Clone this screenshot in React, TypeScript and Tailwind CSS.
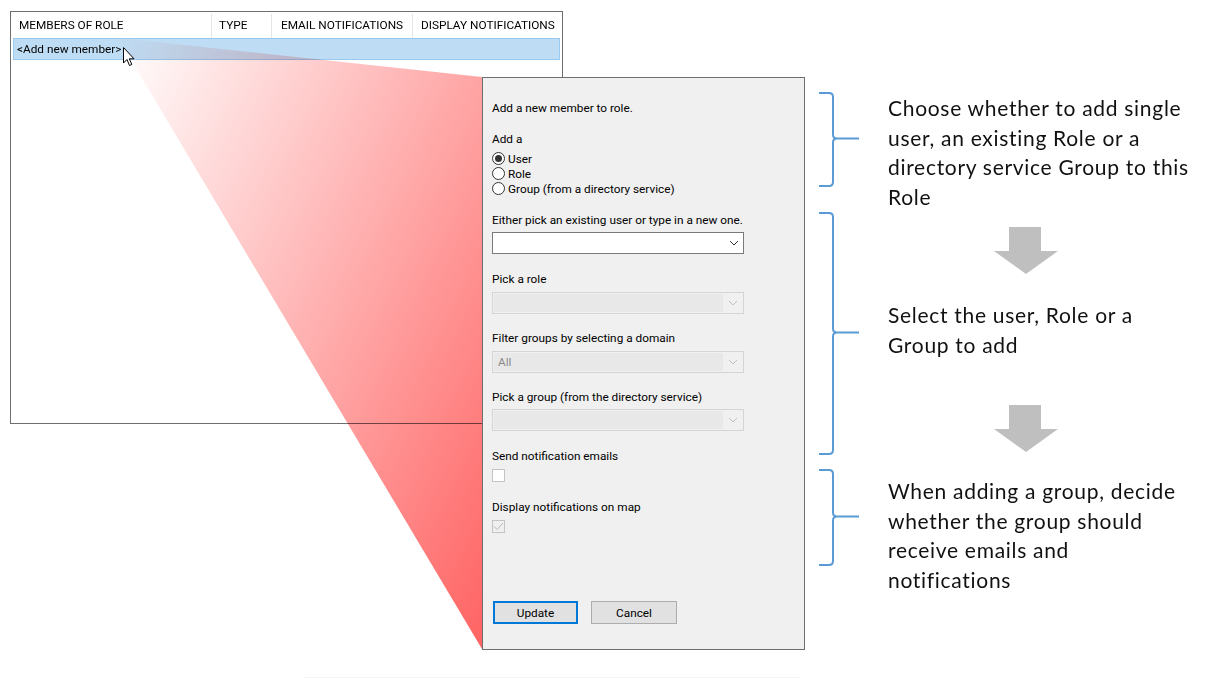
import React from "react";

const ui = "font-['Roboto','Liberation_Sans',sans-serif]";

function Brace({ h }: { h: number }) {
  const m = h / 2;
  return (
    <svg width="42" height={h + 2} className="shrink-0">
      <path
        d={`M1 1 H11 Q15 1 15 5 V${m - 4} Q15 ${m} 19 ${m} H41 M19 ${m} Q15 ${m} 15 ${m + 4} V${h - 3} Q15 ${h + 1} 11 ${h + 1} H1`}
        fill="none"
        stroke="#5b9bd5"
        strokeWidth="2"
      />
    </svg>
  );
}

function DownArrow() {
  return (
    <svg width="64" height="48" className="block">
      <rect x="15" y="0" width="32" height="25" fill="#bfbfbf" />
      <polygon points="0,24 64,24 32,47" fill="#bfbfbf" />
    </svg>
  );
}

function Chevron({ color }: { color: string }) {
  return (
    <svg width="10" height="6" viewBox="0 0 10 6">
      <path d="M1 1 L5 5 L9 1" fill="none" stroke={color} strokeWidth="1" />
    </svg>
  );
}

function Combo({ disabled, value }: { disabled?: boolean; value?: string }) {
  if (!disabled) {
    return (
      <div className="flex h-[22px] w-[252px] items-center justify-end border border-[#7a7a7a] bg-white pr-[4px]">
        <Chevron color="#333" />
      </div>
    );
  }
  return (
    <div className="flex h-[22px] w-[252px] border border-[#d4d4d4] bg-[#f0f0f0] p-[1px]">
      <div className="flex flex-1 items-center bg-[#e8e8e8] pl-[4px] pt-[1px] text-[#8a8a8a]">{value}</div>
      <div className="flex w-[19px] items-center justify-center">
        <Chevron color="#c0c0c0" />
      </div>
    </div>
  );
}

function Label({ mt, children }: { mt: string; children: React.ReactNode }) {
  return <div className={`${mt} h-[15px] leading-[18px]`}>{children}</div>;
}

function Radio({ checked, label }: { checked?: boolean; label: string }) {
  return (
    <div className="flex h-[15px] items-center">
      <span className="flex h-[13px] w-[13px] items-center justify-center rounded-full border border-[#333] bg-white">
        {checked && <span className="h-[7px] w-[7px] rounded-full bg-[#333]" />}
      </span>
      <span className="ml-[3px] translate-y-[1px]">{label}</span>
    </div>
  );
}

export default function App() {
  return (
    <div className="relative flex h-[683px] w-[1211px] overflow-hidden bg-white text-black">
      {/* left: list + dialog */}
      <div className={`relative w-[806px] shrink-0 text-[11.8px] ${ui}`}>
        <div className="ml-[10px] mt-[11px] h-[413px] w-[553px] border border-[#6e6e6e] bg-white">
          <div className="flex h-[26px] items-center pt-[2px] leading-none">
            <div className="flex h-full w-[201px] items-center border-r border-[#e5e5e5] pl-[8px]">MEMBERS OF ROLE</div>
            <div className="flex h-full w-[60px] items-center border-r border-[#e5e5e5] pl-[7px]">TYPE</div>
            <div className="flex h-full w-[141px] items-center border-r border-[#e5e5e5] pl-[9px]">EMAIL NOTIFICATIONS</div>
            <div className="flex h-full flex-1 items-center pl-[8px]">DISPLAY NOTIFICATIONS</div>
          </div>
          <div className="mx-[2px] flex h-[22px] items-center border border-[#99c9ef] bg-[#bedcf3] pl-[3px] pt-[2px]">
            &lt;Add new member&gt;
          </div>
        </div>

        {/* zoom wedge */}
        <svg width="806" height="683" className="pointer-events-none absolute left-0 top-0 mix-blend-multiply">
          <defs>
            <linearGradient id="wedge" gradientUnits="userSpaceOnUse" x1="118" y1="38" x2="649" y2="288">
              <stop offset="0" stopColor="#ffffff" />
              <stop offset="1" stopColor="#ff6464" />
            </linearGradient>
          </defs>
          <polygon points="118,38 482,77 482,649" fill="url(#wedge)" />
        </svg>

        {/* cursor */}
        <svg width="13" height="20" viewBox="0 0 13 20" className="absolute left-[123px] top-[47px]">
          <path
            d="M0.5 0.5 V16 L4 12.5 L6.5 18.5 L8.8 17.5 L6.3 11.8 H11 Z"
            fill="#fff"
            stroke="#000"
            strokeWidth="1"
            strokeLinejoin="miter"
          />
        </svg>

        {/* dialog */}
        <div className="absolute left-[482px] top-[77px] h-[573px] w-[323px] border border-[#6e6e6e] bg-[#f0f0f0] pl-[9px] pt-[21px] leading-[15px]">
          <Label mt="mt-0">Add a new member to role.</Label>
          <Label mt="mt-[16px]">Add a</Label>
          <div className="mt-[6px]">
            <Radio checked label="User" />
            <Radio label="Role" />
            <Radio label="Group (from a directory service)" />
          </div>
          <Label mt="mt-[15px]">Either pick an existing user or type in a new one.</Label>
          <div className="mt-[6px]">
            <Combo />
          </div>
          <Label mt="mt-[16px]">Pick a role</Label>
          <div className="mt-[7px]">
            <Combo disabled />
          </div>
          <Label mt="mt-[15px]">Filter groups by selecting a domain</Label>
          <div className="mt-[7px]">
            <Combo disabled value="All" />
          </div>
          <Label mt="mt-[15px]">Pick a group (from the directory service)</Label>
          <div className="mt-[6px]">
            <Combo disabled />
          </div>
          <Label mt="mt-[16px]">Send notification emails</Label>
          <div className="mt-[7px] h-[13px] w-[13px] border border-[#c4c4c4] bg-white" />
          <Label mt="mt-[16px]">Display notifications on map</Label>
          <div className="mt-[7px] flex h-[13px] w-[13px] items-center justify-center border border-[#c4c4c4]">
            <svg width="11" height="9" viewBox="0 0 11 9">
              <path d="M1 4.5 L4 7.5 L10 1" fill="none" stroke="#b8b8b8" strokeWidth="1" />
            </svg>
          </div>
          <div className="ml-[1px] mt-[68px] flex gap-[13px]">
            <button className="flex h-[23px] w-[85px] items-center justify-center border-2 border-[#0078d7] bg-[#e1e1e1] pt-[2px]">
              Update
            </button>
            <button className="flex h-[23px] w-[86px] items-center justify-center border border-[#adadad] bg-[#e1e1e1] pt-[2px]">
              Cancel
            </button>
          </div>
        </div>

        <div className="absolute left-[305px] top-[677px] h-px w-[495px] bg-[#f3f3f3]" />
      </div>

      {/* right: annotations */}
      <div className="flex-1 pl-[12px] pt-[92px] font-['Lato','Open_Sans',sans-serif] text-[21px] leading-[29.5px] tracking-[0.7px] text-[#111]">
        <div className="flex h-[120px]">
          <Brace h={93} />
          <p className="ml-[28px] mt-[1px] whitespace-nowrap">
            Choose whether to add single
            <br />
            user, an existing Role or a
            <br />
            directory service Group to this
            <br />
            Role
          </p>
        </div>
        <div className="flex h-[257px]">
          <Brace h={241} />
          <div className="ml-[28px] flex flex-col">
            <div className="ml-[106px] mt-[15px]">
              <DownArrow />
            </div>
            <p className="mt-[25px] whitespace-nowrap">
              Select the user, Role or a
              <br />
              Group to add
            </p>
            <div className="ml-[106px] mt-[46px]">
              <DownArrow />
            </div>
          </div>
        </div>
        <div className="flex">
          <Brace h={95} />
          <p className="ml-[28px] mt-[7px] whitespace-nowrap">
            When adding a group, decide
            <br />
            whether the group should
            <br />
            receive emails and
            <br />
            notifications
          </p>
        </div>
      </div>
    </div>
  );
}
